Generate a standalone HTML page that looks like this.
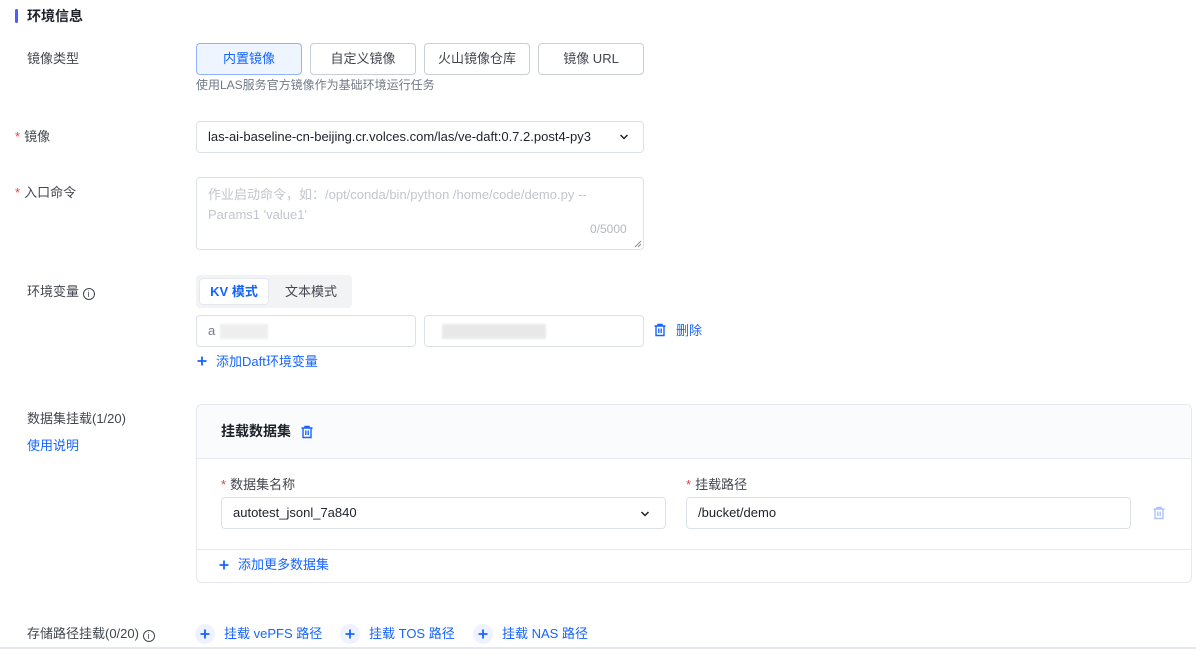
<!DOCTYPE html>
<html><head><meta charset="utf-8"><style>
*{box-sizing:border-box;margin:0;padding:0}
body{width:1196px;height:649px;background:#fff;font-family:"Liberation Sans","Noto Sans CJK SC",sans-serif;font-size:13px;color:#1d2129;position:relative;overflow:hidden;line-height:16px}
.a{position:absolute;white-space:nowrap}
.lbl{color:#42464e}
.req{color:#e63f3f;margin-right:4px}
.btn{position:absolute;top:43px;height:32px;border:1px solid #c9cdd4;border-radius:4px;display:flex;align-items:center;justify-content:center;color:#42464e;background:#fff}
.inp{position:absolute;border:1px solid #dde2e9;border-radius:4px;background:#fff}
.blue{color:#1664ff}
.blur{position:absolute;background:#e8e8e8;filter:blur(1px)}
</style></head><body>
<div class="a" style="left:15px;top:9px;width:3px;height:14px;background:#4e5bff;border-radius:2px"></div>
<div class="a" style="left:27px;top:8px;font-size:14px;font-weight:bold;color:#1d2129">环境信息</div>

<div class="a lbl" style="left:27px;top:51px">镜像类型</div>
<div class="btn" style="left:196px;width:106px;background:#eef5ff;border-color:#8fb3ff;color:#1664ff">内置镜像</div>
<div class="btn" style="left:310px;width:106px">自定义镜像</div>
<div class="btn" style="left:424px;width:106px">火山镜像仓库</div>
<div class="btn" style="left:538px;width:106px">镜像 URL</div>
<div class="a" style="left:196px;top:77px;font-size:12px;color:#737a87">使用LAS服务官方镜像作为基础环境运行任务</div>

<div class="a lbl" style="left:15px;top:129px"><span class="req">*</span>镜像</div>
<div class="inp" style="left:196px;top:121px;width:448px;height:32px"></div>
<div class="a" style="left:208px;top:129px;width:420px;overflow:hidden;color:#1d2129">las-ai-baseline-cn-beijing.cr.volces.com/las/ve-daft:0.7.2.post4-py3</div>
<svg class="a" style="left:619px;top:133px" width="10" height="8"><path d="M1.5 2l3.5 3.5L8.5 2" stroke="#1d2129" stroke-width="1.5" fill="none"/></svg>

<div class="a lbl" style="left:15px;top:185px"><span class="req">*</span>入口命令</div>
<div class="inp" style="left:196px;top:177px;width:448px;height:73px"></div>
<div class="a" style="left:208px;top:185px;color:#c2c6cd;line-height:20px">作业启动命令，如：/opt/conda/bin/python /home/code/demo.py --<br>Params1 'value1'</div>
<div class="a" style="left:590px;top:221px;font-size:12px;color:#b4b8bf">0/5000</div>
<svg class="a" style="left:634px;top:240px" width="8" height="8"><path d="M7 1L1 7M7 4L4 7" stroke="#8a8f98" stroke-width="1"/></svg>

<div class="a lbl" style="left:27px;top:284px">环境变量 <span style="display:inline-block;width:12px;height:12px;border:1px solid #42464e;border-radius:50%;font-size:9px;line-height:10px;text-align:center;vertical-align:-1px">i</span></div>
<div class="a" style="left:196px;top:275px;width:156px;height:33px;background:#f2f3f5;border-radius:4px"></div>
<div class="a" style="left:199px;top:278px;width:70px;height:27px;background:#fff;border-radius:4px;border:1px solid #e5e8ef;color:#1664ff;text-align:center;line-height:25px;font-weight:bold">KV 模式</div>
<div class="a" style="left:285px;top:284px;color:#42464e">文本模式</div>
<div class="inp" style="left:196px;top:315px;width:220px;height:32px"></div>
<div class="a" style="left:208px;top:323px;color:#737a87">a</div>
<div class="blur" style="left:220px;top:324px;width:48px;height:15px;background:#eee"></div>
<div class="inp" style="left:424px;top:315px;width:220px;height:32px"></div>
<div class="blur" style="left:442px;top:324px;width:104px;height:15px"></div>
<svg class="a" style="left:653px;top:323px" width="14" height="14"><path d="M1.5 3h11M5 3V1.5h4V3M3 3v9.5h8V3M5.8 5.5v4.5M8.2 5.5v4.5" stroke="#1664ff" stroke-width="1.4" fill="none"/></svg>
<div class="a blue" style="left:676px;top:323px">删除</div>
<svg class="a" style="left:197px;top:356px" width="10" height="10"><path d="M5 0.5v9M0.5 5h9" stroke="#1664ff" stroke-width="1.8"/></svg>
<div class="a blue" style="left:216px;top:354px">添加Daft环境变量</div>

<div class="a lbl" style="left:27px;top:411px">数据集挂载(1/20)</div>
<div class="a blue" style="left:27px;top:438px">使用说明</div>
<div class="a" style="left:196px;top:404px;width:996px;height:179px;border:1px solid #e5e8ef;border-radius:6px;overflow:hidden">
 <div style="height:54px;background:#fafbfc;border-bottom:1px solid #e5e8ef"></div>
 <div style="position:absolute;left:0;right:0;top:144px;border-top:1px solid #e5e8ef"></div>
</div>
<div class="a" style="left:221px;top:423px;font-size:14px;font-weight:bold">挂载数据集</div>
<svg class="a" style="left:300px;top:425px" width="14" height="14"><path d="M1.5 3h11M5 3V1.5h4V3M3 3v9.5h8V3M5.8 5.5v4.5M8.2 5.5v4.5" stroke="#1664ff" stroke-width="1.4" fill="none"/></svg>
<div class="a lbl" style="left:221px;top:477px"><span class="req">*</span>数据集名称</div>
<div class="a lbl" style="left:686px;top:477px"><span class="req">*</span>挂载路径</div>
<div class="inp" style="left:221px;top:497px;width:445px;height:32px"></div>
<div class="a" style="left:233px;top:505px">autotest_jsonl_7a840</div>
<svg class="a" style="left:640px;top:510px" width="10" height="8"><path d="M1.5 2l3.5 3.5L8.5 2" stroke="#1d2129" stroke-width="1.5" fill="none"/></svg>
<div class="inp" style="left:686px;top:497px;width:445px;height:32px"></div>
<div class="a" style="left:698px;top:505px">/bucket/demo</div>
<svg class="a" style="left:1152px;top:506px" width="14" height="14"><path d="M1.5 3h11M5 3V1.5h4V3M3 3v9.5h8V3M5.8 5.5v4.5M8.2 5.5v4.5" stroke="#a9c4ff" stroke-width="1.4" fill="none"/></svg>
<svg class="a" style="left:219px;top:560px" width="10" height="10"><path d="M5 0.5v9M0.5 5h9" stroke="#1664ff" stroke-width="1.8"/></svg>
<div class="a blue" style="left:238px;top:557px">添加更多数据集</div>

<div class="a lbl" style="left:27px;top:626px">存储路径挂载(0/20) <span style="display:inline-block;width:12px;height:12px;border:1px solid #42464e;border-radius:50%;font-size:9px;line-height:10px;text-align:center;vertical-align:-1px">i</span></div>
<div class="a" style="left:195px;top:624px;width:20px;height:20px;border-radius:50%;background:#eef3ff"></div>
<svg class="a" style="left:200px;top:629px" width="10" height="10"><path d="M5 0.5v9M0.5 5h9" stroke="#1664ff" stroke-width="1.8"/></svg>
<div class="a blue" style="left:224px;top:626px">挂载 vePFS 路径</div>
<div class="a" style="left:340px;top:624px;width:20px;height:20px;border-radius:50%;background:#eef3ff"></div>
<svg class="a" style="left:345px;top:629px" width="10" height="10"><path d="M5 0.5v9M0.5 5h9" stroke="#1664ff" stroke-width="1.8"/></svg>
<div class="a blue" style="left:369px;top:626px">挂载 TOS 路径</div>
<div class="a" style="left:473px;top:624px;width:20px;height:20px;border-radius:50%;background:#eef3ff"></div>
<svg class="a" style="left:478px;top:629px" width="10" height="10"><path d="M5 0.5v9M0.5 5h9" stroke="#1664ff" stroke-width="1.8"/></svg>
<div class="a blue" style="left:502px;top:626px">挂载 NAS 路径</div>
<div class="a" style="left:0;top:647px;width:1196px;height:2px;background:#e5e8ef"></div>
</body></html>
